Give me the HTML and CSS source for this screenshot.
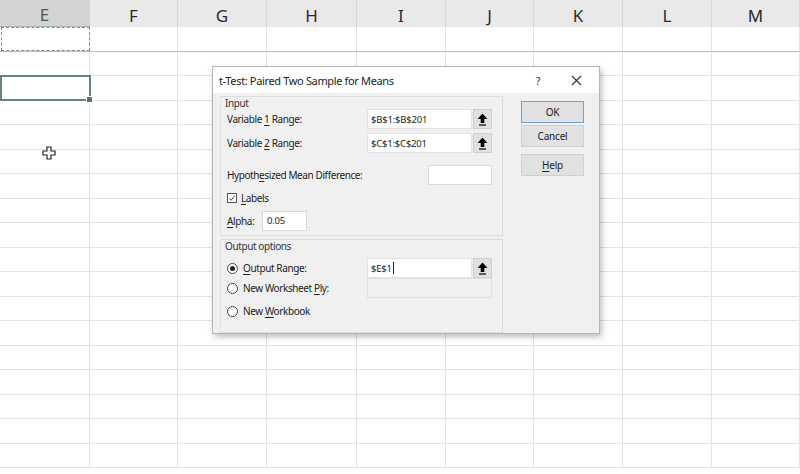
FILE: index.html
```html
<!DOCTYPE html>
<html lang="en">
<head>
    <meta charset="UTF-8">
    <title>t-Test: Paired Two Sample for Means</title>
    <link rel="stylesheet" href="styles.css">
</head>
<body>
    <div class="sheet">
        <!-- column headers -->
        <div class="col-head active">E</div>
        <div class="col-head">F</div>
        <div class="col-head">G</div>
        <div class="col-head">H</div>
        <div class="col-head">I</div>
        <div class="col-head">J</div>
        <div class="col-head">K</div>
        <div class="col-head">L</div>
        <div class="col-head">M</div>
    </div>
    <div class="grid" id="grid"></div>

    <!-- selections over the grid -->
    <div class="copy-marquee"></div>
    <div class="cell-cursor"><span class="fill-handle"></span></div>
    <svg class="pointer" width="14" height="14" viewBox="0 0 14 14">
        <path d="M5 1h4v4h4v4h-4v4h-4v-4h-4v-4h4z" fill="#fff" stroke="#222" stroke-width="1.2"/>
    </svg>

    <!-- Analysis ToolPak dialog -->
    <div class="dialog">
        <div class="titlebar">
            <span class="title">t-Test: Paired Two Sample for Means</span>
            <span class="help-q">?</span>
            <svg class="close" width="11" height="11" viewBox="0 0 11 11">
                <path d="M1 1l9 9M10 1l-9 9" stroke="#333" stroke-width="1.1"/>
            </svg>
        </div>
        <div class="dialog-body">
            <div class="groups">
                <div class="group input-group">
                    <div class="group-label">Input</div>
                    <div class="row var-row">
                        <span class="label">Variable <u>1</u> Range:</span>
                        <div class="ref-field">
                            <span class="ref-box">$B$1:$B$201</span>
                            <span class="ref-btn"><svg width="11" height="13" viewBox="0 0 11 13"><path d="M5.5 0.5L10.5 6H7.3v4H3.7V6H0.5z" fill="#000"/><path d="M2 12h7" stroke="#000" stroke-width="1.2"/></svg></span>
                        </div>
                    </div>
                    <div class="row var-row second">
                        <span class="label">Variable <u>2</u> Range:</span>
                        <div class="ref-field">
                            <span class="ref-box">$C$1:$C$201</span>
                            <span class="ref-btn"><svg width="11" height="13" viewBox="0 0 11 13"><path d="M5.5 0.5L10.5 6H7.3v4H3.7V6H0.5z" fill="#000"/><path d="M2 12h7" stroke="#000" stroke-width="1.2"/></svg></span>
                        </div>
                    </div>
                    <div class="row hyp-row">
                        <span class="label">Hypoth<u>e</u>sized Mean Difference:</span>
                        <span class="text-box hyp-box"></span>
                    </div>
                    <div class="row check-row">
                        <span class="checkbox"><svg width="9" height="9" viewBox="0 0 9 9"><path d="M1.5 4.5l2 2 4-5" fill="none" stroke="#333" stroke-width="1"/></svg></span>
                        <span class="label"><u>L</u>abels</span>
                    </div>
                    <div class="row alpha-row">
                        <span class="label"><u>A</u>lpha:</span>
                        <span class="text-box alpha-box">0.05</span>
                    </div>
                </div>
                <div class="group output-group">
                    <div class="group-label">Output options</div>
                    <div class="row out-row">
                        <span class="radio checked"></span>
                        <span class="label"><u>O</u>utput Range:</span>
                        <div class="ref-field">
                            <span class="ref-box">$E$1<span class="caret"></span></span>
                            <span class="ref-btn"><svg width="11" height="13" viewBox="0 0 11 13"><path d="M5.5 0.5L10.5 6H7.3v4H3.7V6H0.5z" fill="#000"/><path d="M2 12h7" stroke="#000" stroke-width="1.2"/></svg></span>
                        </div>
                    </div>
                    <div class="row ply-row">
                        <span class="radio"></span>
                        <span class="label">New Worksheet <u>P</u>ly:</span>
                        <span class="text-box ply-box"></span>
                    </div>
                    <div class="row book-row">
                        <span class="radio"></span>
                        <span class="label">New <u>W</u>orkbook</span>
                    </div>
                </div>
            </div>
            <div class="buttons">
                <button class="btn default">OK</button>
                <button class="btn">Cancel</button>
                <button class="btn help-btn"><u>H</u>elp</button>
            </div>
        </div>
    </div>

    <script>
        // fill the sheet with empty cells
        const grid = document.getElementById('grid');
        for (let r = 0; r < 18; r++) {
            for (let c = 0; c < 9; c++) {
                const cell = document.createElement('div');
                cell.className = r === 0 ? 'cell first-row' : 'cell';
                grid.appendChild(cell);
            }
        }
    </script>
</body>
</html>
```

FILE: styles.css
```css
body {
    margin: 0;
    width: 800px;
    height: 474px;
    overflow: hidden;
    background: #fff;
    font-family: "Noto Sans", "Open Sans", sans-serif;
    position: relative;
}
.sheet, .grid {
    display: grid;
    grid-template-columns: 90px 88px 89px 90px 89px 88px 89px 89px 88px;
}
.col-head {
    height: 27px;
    background: #e9e9e9;
    border-right: 1px solid #d6d6d6;
    box-sizing: border-box;
    display: flex;
    align-items: center;
    justify-content: center;
    font-size: 17px;
    color: #2b2b2b;
    padding-top: 3px;
}
.col-head.active {
    background: #d3d3d3;
    color: #555;
    border-bottom: 1px solid #a8b8ab;
}
.grid {
    grid-auto-rows: 24.5px;
}
.cell {
    border-right: 1px solid #e2e2e2;
    border-bottom: 1px solid #e2e2e2;
    box-sizing: border-box;
}
.cell.first-row {
    border-bottom: 1px solid #b9b9b9;
}
.copy-marquee {
    position: absolute;
    left: 1px;
    top: 27px;
    width: 89px;
    height: 24px;
    border: 1px dashed #7d8f80;
    box-sizing: border-box;
}
.cell-cursor {
    position: absolute;
    left: 0;
    top: 75px;
    width: 91px;
    height: 26px;
    border: 2px solid #6a8571;
    box-sizing: border-box;
}
.fill-handle {
    position: absolute;
    right: -4px;
    bottom: -4px;
    width: 5px;
    height: 5px;
    background: #5e7564;
    border: 1px solid #fff;
}
.pointer {
    position: absolute;
    left: 42px;
    top: 146px;
}

/* dialog */
.dialog {
    position: absolute;
    left: 212px;
    top: 66px;
    width: 388px;
    height: 268px;
    background: #f0f0f0;
    border: 1px solid #b5b5b5;
    box-sizing: border-box;
    box-shadow: 2px 3px 6px rgba(0, 0, 0, 0.25);
    color: #222;
    font-size: 10px;
    letter-spacing: -0.4px;
}
.titlebar {
    height: 26px;
    background: #fff;
    display: flex;
    align-items: center;
    padding: 0 0 0 6px;
}
.title {
    font-size: 11px;
    letter-spacing: -0.35px;
    flex: 1;
    color: #222;
}
.help-q {
    font-size: 11px;
    margin-right: 31px;
    color: #333;
}
.close {
    margin-right: 17px;
}
.dialog-body {
    display: flex;
    padding: 3px 0 0 7px;
}
.groups {
    width: 283px;
    display: flex;
    flex-direction: column;
    gap: 3px;
}
.group {
    border: 1px solid #dcdcdc;
    border-left-color: #e4e4e4;
    padding: 0 0 0 4px;
    box-sizing: border-box;
}
.input-group {
    height: 140px;
}
.output-group {
    height: 94px;
}
.group-label {
    height: 11px;
    line-height: 11px;
    margin-top: 1px;
    color: #333;
}
.row {
    display: flex;
    align-items: center;
    height: 20px;
    padding-left: 2px;
}
.var-row.second {
    margin-top: 4px;
}
.hyp-row {
    margin-top: 12px;
}
.check-row {
    margin-top: 7px;
    height: 12px;
}
.alpha-row {
    margin-top: 7px;
    height: 19px;
}
.label {
    flex: 1;
    white-space: nowrap;
}
.label u, .btn u {
    text-decoration-thickness: 1px;
    text-underline-offset: 2px;
}
.ref-field {
    display: flex;
    width: 125px;
    height: 20px;
    margin-right: 10px;
}
.ref-box {
    width: 105px;
    background: #fff;
    border: 1px solid #e3e3e3;
    box-sizing: border-box;
    display: flex;
    align-items: center;
    padding-left: 3px;
    font-size: 9.5px;
    letter-spacing: -0.2px;
}
.ref-btn {
    width: 19px;
    margin-left: 1px;
    background: #e1e1e1;
    border: 1px solid #cfcfcf;
    box-sizing: border-box;
    display: flex;
    align-items: center;
    justify-content: center;
}
.text-box {
    background: #fff;
    border: 1px solid #d9d9d9;
    box-sizing: border-box;
    height: 20px;
    display: flex;
    align-items: center;
    padding-left: 4px;
    font-size: 9.5px;
    letter-spacing: -0.2px;
}
.hyp-box {
    width: 64px;
    margin-right: 10px;
}
.alpha-row .label {
    flex: none;
    width: 35px;
}
.alpha-box {
    width: 45px;
}
.checkbox {
    width: 10px;
    height: 10px;
    border: 1px solid #555;
    box-sizing: border-box;
    background: #fff;
    display: flex;
    align-items: center;
    justify-content: center;
    margin-right: 4px;
}
.radio {
    width: 11px;
    height: 11px;
    border: 1px solid #444;
    border-radius: 50%;
    box-sizing: border-box;
    background: #fff;
    margin-right: 5px;
    position: relative;
}
.radio.checked::after {
    content: "";
    position: absolute;
    left: 2px;
    top: 2px;
    width: 5px;
    height: 5px;
    border-radius: 50%;
    background: #222;
}
.out-row {
    margin-top: 6px;
}
.ply-row {
    margin-top: 0;
}
.ply-box {
    width: 125px;
    margin-right: 10px;
    background: #f0f0f0;
    border-color: #e0e0e0;
}
.book-row {
    margin-top: 5px;
    height: 16px;
}
.caret {
    display: inline-block;
    width: 1px;
    height: 12px;
    background: #222;
    margin-left: 1px;
}
.buttons {
    display: flex;
    flex-direction: column;
    margin-left: 18px;
    margin-top: 5px;
}
.btn {
    width: 63px;
    height: 22px;
    background: #e1e1e1;
    border: 1px solid #d0d0d0;
    font-family: inherit;
    font-size: 10px;
    letter-spacing: -0.2px;
    color: #222;
    padding: 0;
    margin: 0 0 2px;
}
.btn.default {
    border: 1px solid #7aa2c8;
}
.help-btn {
    margin-top: 5px;
}
```
